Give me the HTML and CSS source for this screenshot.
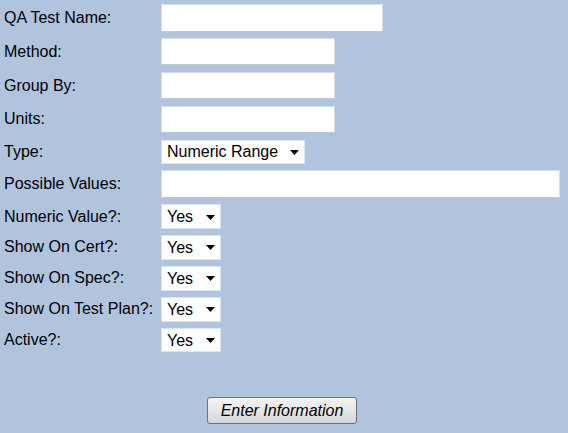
FILE: index.html
```html
<!DOCTYPE html>
<html lang="en">
<head>
<meta charset="utf-8">
<title>QA Test</title>
<link rel="stylesheet" href="styles.css">
</head>
<body>
<form class="form">
  <div class="grid">
    <label class="lbl" for="name">QA Test Name:</label>
    <div class="cell"><input id="name" class="txt w-name" type="text"></div>

    <label class="lbl" for="method">Method:</label>
    <div class="cell"><input id="method" class="txt w-mid" type="text"></div>

    <label class="lbl" for="group">Group By:</label>
    <div class="cell"><input id="group" class="txt w-mid" type="text"></div>

    <label class="lbl" for="units">Units:</label>
    <div class="cell"><input id="units" class="txt w-mid" type="text"></div>

    <label class="lbl" for="type">Type:</label>
    <div class="cell">
      <span class="sel w-type"><select id="type"><option>Numeric Range</option></select><svg class="arrow" width="9" height="5" viewBox="0 0 9 5"><polygon points="0,0 9,0 4.5,5"/></svg></span>
    </div>

    <label class="lbl" for="values">Possible Values:</label>
    <div class="cell"><input id="values" class="txt w-long" type="text"></div>

    <label class="lbl" for="numeric">Numeric Value?:</label>
    <div class="cell">
      <span class="sel w-yn"><select id="numeric"><option>Yes</option><option>No</option></select><svg class="arrow" width="9" height="5" viewBox="0 0 9 5"><polygon points="0,0 9,0 4.5,5"/></svg></span>
    </div>

    <label class="lbl" for="cert">Show On Cert?:</label>
    <div class="cell">
      <span class="sel w-yn"><select id="cert"><option>Yes</option><option>No</option></select><svg class="arrow" width="9" height="5" viewBox="0 0 9 5"><polygon points="0,0 9,0 4.5,5"/></svg></span>
    </div>

    <label class="lbl" for="spec">Show On Spec?:</label>
    <div class="cell">
      <span class="sel w-yn"><select id="spec"><option>Yes</option><option>No</option></select><svg class="arrow" width="9" height="5" viewBox="0 0 9 5"><polygon points="0,0 9,0 4.5,5"/></svg></span>
    </div>

    <label class="lbl" for="plan">Show On Test Plan?:</label>
    <div class="cell">
      <span class="sel w-yn"><select id="plan"><option>Yes</option><option>No</option></select><svg class="arrow" width="9" height="5" viewBox="0 0 9 5"><polygon points="0,0 9,0 4.5,5"/></svg></span>
    </div>

    <label class="lbl" for="active">Active?:</label>
    <div class="cell">
      <span class="sel w-yn"><select id="active"><option>Yes</option><option>No</option></select><svg class="arrow" width="9" height="5" viewBox="0 0 9 5"><polygon points="0,0 9,0 4.5,5"/></svg></span>
    </div>
  </div>
  <div class="actions">
    <button type="submit" class="btn">Enter Information</button>
  </div>
</form>
</body>
</html>
```
FILE: styles.css
```css
html, body {
  margin: 0;
  padding: 0;
  background: #b0c4de;
}
body {
  font-family: "Liberation Sans", Arial, sans-serif;
  font-size: 16px;
  color: #000;
  width: 568px;
  height: 433px;
  overflow: hidden;
}
.form {
  padding: 4px 8px 0 4px;
}
.grid {
  display: grid;
  grid-template-columns: 157px 1fr;
  row-gap: 6.4px;
  align-items: center;
}
.lbl {
  line-height: 18px;
  white-space: nowrap;
}
.cell {
  display: flex;
  align-items: center;
}
.txt {
  box-sizing: border-box;
  height: 27.5px;
  margin: 0;
  padding: 0 4px;
  background: #fff;
  border: 1px solid #d9dde3;
  border-bottom-color: #c4c8cc;
  font: inherit;
  outline: none;
}
.w-name { width: 222px; }
.w-mid { width: 174px; }
.w-long { width: 399px; }

.sel {
  box-sizing: border-box;
  display: inline-flex;
  align-items: center;
  height: 24.5px;
  background: #fff;
  border: 1px solid #dde3ea;
  padding: 0 5px 0 5px;
}
.sel select {
  appearance: none;
  -webkit-appearance: none;
  border: 0;
  background: transparent;
  font: inherit;
  color: #000;
  padding: 0;
  margin: 0;
  flex: 1;
  min-width: 0;
  outline: none;
  height: 100%;
}
.arrow {
  flex: none;
  fill: #000;
  margin-top: 1px;
}
.w-type { width: 144px; }
.w-yn { width: 60px; }

.actions {
  display: flex;
  justify-content: center;
  margin-top: 45px;
}
.btn {
  box-sizing: border-box;
  width: 150px;
  height: 27px;
  margin: 0;
  padding: 0;
  border: 1px solid #707070;
  border-radius: 3px;
  background: linear-gradient(#f4f4f4, #e6e6e6 50%, #d6d6d6);
  font-family: "Liberation Sans", Arial, sans-serif;
  font-size: 16px;
  font-style: italic;
  color: #000;
}
```
